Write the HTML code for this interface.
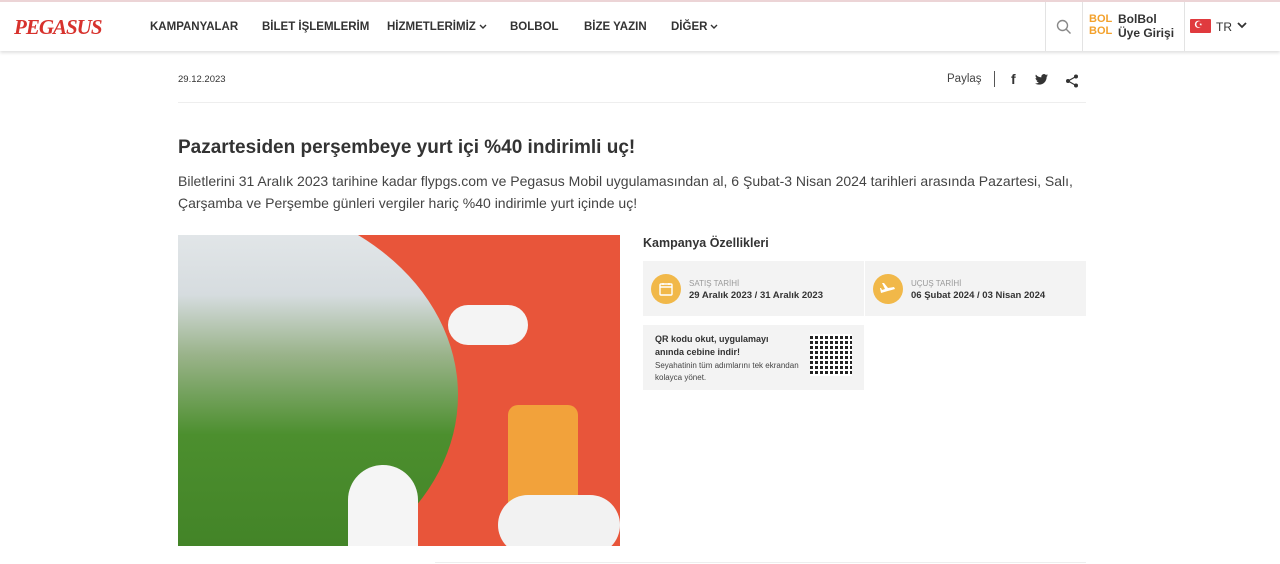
<!DOCTYPE html>
<html><head><meta charset="utf-8"><style>
*{box-sizing:border-box;margin:0;padding:0}
html,body{width:1280px;height:564px;overflow:hidden}
body{background:#fff;font-family:"Liberation Sans",sans-serif;color:#333;position:relative}
.hdr{position:absolute;left:0;top:0;width:1280px;height:51px;border-top:2px solid #ecd4d6;background:#fff;box-shadow:0 2px 3px rgba(0,0,0,.12)}
.logo{position:absolute;left:14px;top:13px;font:italic bold 21px "Liberation Serif",serif;color:#d7322d;letter-spacing:-1px}
.nav a{position:absolute;top:18px;height:14px;line-height:14px;font-size:11.5px;font-weight:bold;color:#333;text-decoration:none;white-space:nowrap}
.nav svg{vertical-align:middle;margin-left:3px}
.sep{position:absolute;top:0;width:1px;height:49px;background:#e3e3e3}
.hr{position:absolute;left:178px;width:908px;height:1px;background:#eee}
h1{position:absolute;left:178px;top:137px;font-size:19px;font-weight:bold;color:#333}
.lead{position:absolute;left:178px;top:170px;width:910px;font-size:14px;line-height:22px;color:#444}
.img{position:absolute;left:178px;top:235px;width:442px;height:311px;overflow:hidden;background:#e8553a}
.card{position:absolute;background:#f3f3f3}
.ic{position:absolute;left:8px;top:13px;width:30px;height:30px;border-radius:50%;background:#f1b849}
.lbl{position:absolute;left:46px;top:18px;font-size:8px;color:#999}
.val{position:absolute;left:46px;top:29px;font-size:9.5px;font-weight:bold;color:#333}
</style></head><body>
<div class="hdr">
<div class="logo">PEGASUS</div>
<div class="nav">
<a style="left:150px">KAMPANYALAR</a>
<a style="left:262px">BİLET İŞLEMLERİM</a>
<a style="left:387px">HİZMETLERİMİZ<svg width="8" height="6" viewBox="0 0 8 6"><path d="M1 1l3 3 3-3" fill="none" stroke="#333" stroke-width="1.4"/></svg></a>
<a style="left:510px">BOLBOL</a>
<a style="left:584px">BİZE YAZIN</a>
<a style="left:671px">DİĞER<svg width="8" height="6" viewBox="0 0 8 6"><path d="M1 1l3 3 3-3" fill="none" stroke="#333" stroke-width="1.4"/></svg></a>
</div>
<div class="sep" style="left:1045px"></div>
<svg style="position:absolute;left:1056px;top:17px" width="16" height="16" viewBox="0 0 16 16"><circle cx="6.5" cy="6.5" r="5" fill="none" stroke="#888" stroke-width="1.4"/><path d="M10 10l4.5 4.5" stroke="#888" stroke-width="1.4"/></svg>
<div class="sep" style="left:1082px"></div>
<div style="position:absolute;left:1089px;top:11px;font-weight:bold;font-size:11px;line-height:12px;color:#f3a12c">BOL<br>BOL</div>
<div style="position:absolute;left:1118px;top:10px;font-weight:bold;font-size:12px;line-height:14px;color:#333">BolBol<br>Üye Girişi</div>
<div class="sep" style="left:1184px"></div>
<div style="position:absolute;left:1190px;top:17px;width:21px;height:14px;background:#e03a3e;border-radius:1px;color:#fff;font-size:10px;line-height:14px;padding-left:4px">☪</div>
<div style="position:absolute;left:1216px;top:18px;font-size:12px;color:#333">TR</div>
<svg style="position:absolute;left:1237px;top:20px" width="10" height="7" viewBox="0 0 10 7"><path d="M1 1l4 4 4-4" fill="none" stroke="#333" stroke-width="1.8"/></svg>
</div>
<div style="position:absolute;left:178px;top:74px;font-size:9.5px;color:#333">29.12.2023</div>
<div style="position:absolute;left:947px;top:73px;font-size:11.5px;color:#444">Paylaş</div>
<div style="position:absolute;left:994px;top:71px;width:1px;height:16px;background:#555"></div>
<div style="position:absolute;left:1011px;top:71px;font-weight:bold;font-size:14px;color:#333">f</div>
<svg style="position:absolute;left:1035px;top:74px" width="13" height="11" viewBox="0 0 24 20"><path d="M24 2.4a10 10 0 0 1-2.8.8A5 5 0 0 0 23.3.4a10 10 0 0 1-3.1 1.2A4.9 4.9 0 0 0 11.8 6 14 14 0 0 1 1.7.9a4.9 4.9 0 0 0 1.5 6.6A4.9 4.9 0 0 1 1 6.9a4.9 4.9 0 0 0 3.9 4.8 5 5 0 0 1-2.2.1 4.9 4.9 0 0 0 4.6 3.4A9.9 9.9 0 0 1 0 17.3 14 14 0 0 0 7.5 19.5c9 0 14-7.5 14-14v-.6A10 10 0 0 0 24 2.4z" fill="#333"/></svg>
<svg style="position:absolute;left:1065px;top:74px" width="14" height="14" viewBox="0 0 14 14"><circle cx="11" cy="2.5" r="2" fill="#333"/><circle cx="3" cy="7" r="2" fill="#333"/><circle cx="11" cy="11.5" r="2" fill="#333"/><path d="M11 2.5L3 7l8 4.5" stroke="#333" fill="none" stroke-width="1.2"/></svg>
<div class="hr" style="top:102px"></div>
<h1>Pazartesiden perşembeye yurt içi %40 indirimli uç!</h1>
<div class="lead">Biletlerini 31 Aralık 2023 tarihine kadar flypgs.com ve Pegasus Mobil uygulamasından al, 6 Şubat-3 Nisan 2024 tarihleri arasında Pazartesi, Salı, Çarşamba ve Perşembe günleri vergiler hariç %40 indirimle yurt içinde uç!</div>
<div class="img">
<div style="position:absolute;left:-220px;top:-40px;width:500px;height:400px;border-radius:50%;background:linear-gradient(180deg,#e9ecee 0%,#d6dcdf 25%,#9ab38a 40%,#4c8f2e 60%,#3f7f25 100%)"></div>
<div style="position:absolute;left:270px;top:70px;width:80px;height:40px;border-radius:20px;background:#f4f4f4"></div>
<div style="position:absolute;left:330px;top:170px;width:70px;height:110px;border-radius:10px;background:#f2a23b"></div>
<div style="position:absolute;left:320px;top:260px;width:122px;height:60px;border-radius:30px;background:#f2f2f2"></div>
<div style="position:absolute;left:170px;top:230px;width:70px;height:81px;border-radius:35px 35px 0 0;background:#f5f5f5"></div>
</div>
<div style="position:absolute;left:643px;top:236px;font-size:12.5px;font-weight:bold;color:#333">Kampanya Özellikleri</div>
<div class="card" style="left:643px;top:261px;width:221px;height:55px"><div class="ic"><svg style="position:absolute;left:8px;top:8px" width="14" height="14" viewBox="0 0 14 14"><rect x="1" y="2" width="12" height="11" rx="1" fill="none" stroke="#fff" stroke-width="1.4"/><path d="M1 5h12M4 1v2M10 1v2" stroke="#fff" stroke-width="1.4"/></svg></div><div class="lbl">SATIŞ TARİHİ</div><div class="val">29 Aralık 2023 / 31 Aralık 2023</div></div>
<div class="card" style="left:865px;top:261px;width:221px;height:55px"><div class="ic"><svg style="position:absolute;left:7px;top:8px" width="16" height="14" viewBox="0 0 16 14"><path d="M1 11l14-4-1-2-6 1-4-5H2l3 6-3 1-1-2H0z" fill="#fff"/></svg></div><div class="lbl">UÇUŞ TARİHİ</div><div class="val">06 Şubat 2024 / 03 Nisan 2024</div></div>
<div class="card" style="left:643px;top:325px;width:221px;height:65px">
<div style="position:absolute;left:12px;top:8px;font-size:9px;font-weight:bold;line-height:13px">QR kodu okut, uygulamayı<br>anında cebine indir!</div>
<div style="position:absolute;left:12px;top:35px;font-size:8px;line-height:12px;color:#444">Seyahatinin tüm adımlarını tek ekrandan<br>kolayca yönet.</div>
<div style="position:absolute;left:167px;top:9px;width:42px;height:42px;background:repeating-linear-gradient(0deg,#fff 0 2px,transparent 2px 5px),repeating-linear-gradient(90deg,#222 0 3px,#fff 3px 5px)"></div>
</div>
<div style="position:absolute;left:435px;top:562px;width:651px;height:1px;background:#eee"></div>
</body></html>
